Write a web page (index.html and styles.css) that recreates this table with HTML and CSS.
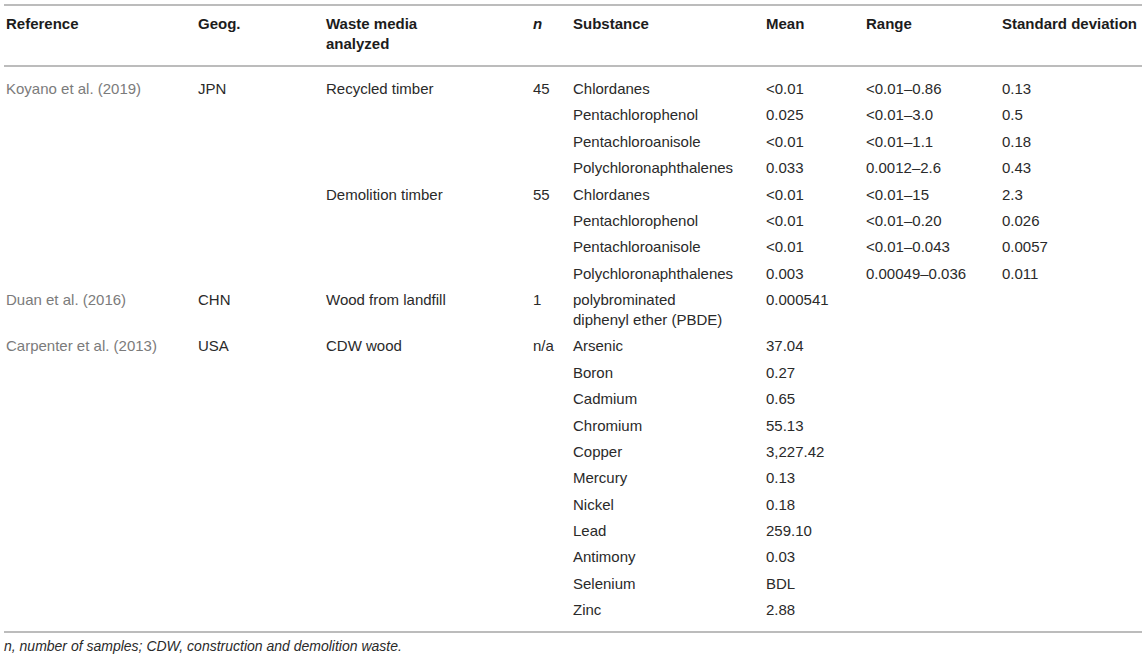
FILE: index.html
```html
<!DOCTYPE html>
<html lang="en">
<head>
<meta charset="utf-8">
<title>Table</title>
<link rel="stylesheet" href="styles.css">
</head>
<body>
<div class="wrap">
<table class="data">
  <colgroup>
    <col class="c-ref"><col class="c-geo"><col class="c-waste"><col class="c-n"><col class="c-sub"><col class="c-mean"><col class="c-range"><col class="c-sd">
  </colgroup>
  <thead>
    <tr>
      <th>Reference</th>
      <th>Geog.</th>
      <th>Waste media<br>analyzed</th>
      <th><em>n</em></th>
      <th>Substance</th>
      <th>Mean</th>
      <th>Range</th>
      <th>Standard deviation</th>
    </tr>
  </thead>
  <tbody>
    <tr><td class="ref">Koyano et al. (2019)</td><td>JPN</td><td>Recycled timber</td><td>45</td><td>Chlordanes</td><td>&lt;0.01</td><td>&lt;0.01–0.86</td><td>0.13</td></tr>
    <tr><td class="ref"></td><td></td><td></td><td></td><td>Pentachlorophenol</td><td>0.025</td><td>&lt;0.01–3.0</td><td>0.5</td></tr>
    <tr><td class="ref"></td><td></td><td></td><td></td><td>Pentachloroanisole</td><td>&lt;0.01</td><td>&lt;0.01–1.1</td><td>0.18</td></tr>
    <tr><td class="ref"></td><td></td><td></td><td></td><td>Polychloronaphthalenes</td><td>0.033</td><td>0.0012–2.6</td><td>0.43</td></tr>
    <tr><td class="ref"></td><td></td><td>Demolition timber</td><td>55</td><td>Chlordanes</td><td>&lt;0.01</td><td>&lt;0.01–15</td><td>2.3</td></tr>
    <tr><td class="ref"></td><td></td><td></td><td></td><td>Pentachlorophenol</td><td>&lt;0.01</td><td>&lt;0.01–0.20</td><td>0.026</td></tr>
    <tr><td class="ref"></td><td></td><td></td><td></td><td>Pentachloroanisole</td><td>&lt;0.01</td><td>&lt;0.01–0.043</td><td>0.0057</td></tr>
    <tr><td class="ref"></td><td></td><td></td><td></td><td>Polychloronaphthalenes</td><td>0.003</td><td>0.00049–0.036</td><td>0.011</td></tr>
    <tr><td class="ref">Duan et al. (2016)</td><td>CHN</td><td>Wood from landfill</td><td>1</td><td>polybrominated<br>diphenyl ether (PBDE)</td><td>0.000541</td><td></td><td></td></tr>
    <tr><td class="ref">Carpenter et al. (2013)</td><td>USA</td><td>CDW wood</td><td>n/a</td><td>Arsenic</td><td>37.04</td><td></td><td></td></tr>
    <tr><td class="ref"></td><td></td><td></td><td></td><td>Boron</td><td>0.27</td><td></td><td></td></tr>
    <tr><td class="ref"></td><td></td><td></td><td></td><td>Cadmium</td><td>0.65</td><td></td><td></td></tr>
    <tr><td class="ref"></td><td></td><td></td><td></td><td>Chromium</td><td>55.13</td><td></td><td></td></tr>
    <tr><td class="ref"></td><td></td><td></td><td></td><td>Copper</td><td>3,227.42</td><td></td><td></td></tr>
    <tr><td class="ref"></td><td></td><td></td><td></td><td>Mercury</td><td>0.13</td><td></td><td></td></tr>
    <tr><td class="ref"></td><td></td><td></td><td></td><td>Nickel</td><td>0.18</td><td></td><td></td></tr>
    <tr><td class="ref"></td><td></td><td></td><td></td><td>Lead</td><td>259.10</td><td></td><td></td></tr>
    <tr><td class="ref"></td><td></td><td></td><td></td><td>Antimony</td><td>0.03</td><td></td><td></td></tr>
    <tr><td class="ref"></td><td></td><td></td><td></td><td>Selenium</td><td>BDL</td><td></td><td></td></tr>
    <tr><td class="ref"></td><td></td><td></td><td></td><td>Zinc</td><td>2.88</td><td></td><td></td></tr>
  </tbody>
</table>
<p class="note"><em>n, number of samples; CDW, construction and demolition waste.</em></p>
</div>
</body>
</html>
```

FILE: styles.css
```css
html, body {
  margin: 0;
  padding: 0;
  background: #ffffff;
}

body {
  font-family: "Liberation Sans", Arial, sans-serif;
  color: #2a2a2a;
}

.wrap {
  padding: 4px 4px 0 4px;
}

.data {
  width: 1138px;
  border-collapse: collapse;
  table-layout: fixed;
  font-size: 15px;
  line-height: 20px;
  border-top: 2px solid #bcbcbc;
  border-bottom: 2px solid #bcbcbc;
}

.c-ref { width: 192px; }
.c-geo { width: 128px; }
.c-waste { width: 207px; }
.c-n { width: 40px; }
.c-sub { width: 193px; }
.c-mean { width: 100px; }
.c-range { width: 136px; }
.c-sd { width: 142px; }

.data th {
  text-align: left;
  vertical-align: top;
  font-weight: bold;
  color: #1c1c1c;
  padding: 8px 2px 11px 2px;
  border-bottom: 2px solid #bcbcbc;
}

.data td {
  text-align: left;
  vertical-align: top;
  padding: 3.2px 2px;
  color: #2a2a2a;
  white-space: nowrap;
}

.data td.ref {
  color: #7b7b7b;
}

.data tbody tr:first-child td {
  padding-top: 12px;
}

.data tbody tr:last-child td {
  padding-bottom: 11px;
}

.note {
  margin: 4px 0 0 0;
  font-size: 14px;
  line-height: 18px;
  color: #2a2a2a;
}
```
